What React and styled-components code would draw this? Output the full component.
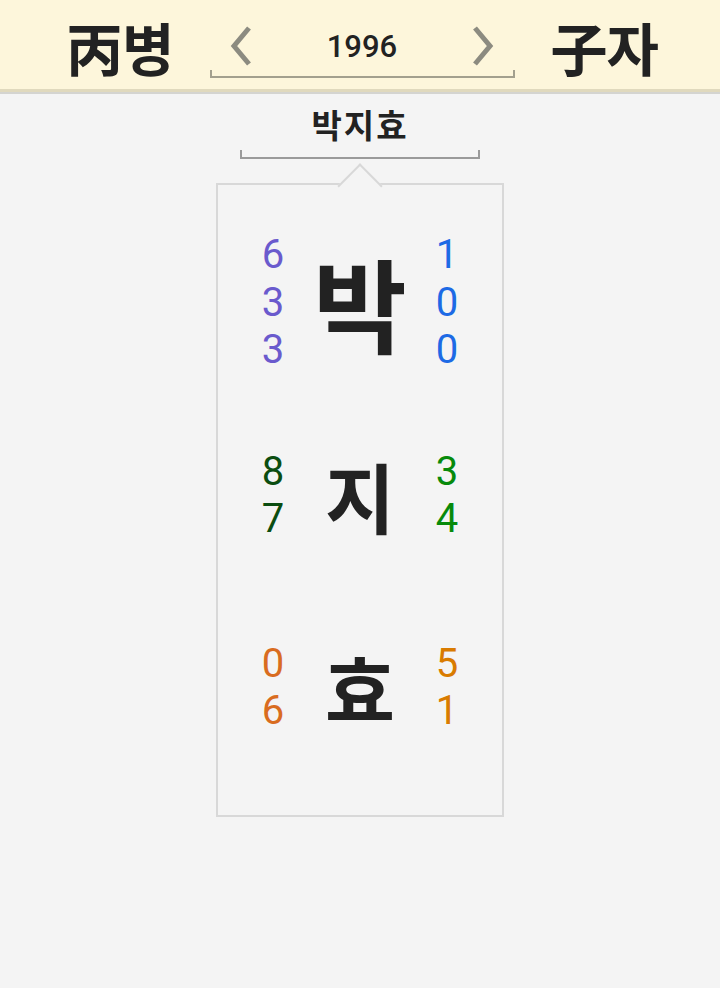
import React from 'react'
import styled, { createGlobalStyle } from 'styled-components'

const GlobalStyle = createGlobalStyle`
  html, body {
    margin: 0;
    padding: 0;
    background: #f4f4f4;
    font-family: 'Noto Sans CJK KR', 'Noto Sans', sans-serif;
    color: #222;
  }
`

const Page = styled.div`
  min-height: 988px;
  display: flex;
  flex-direction: column;
  align-items: center;
`

const Header = styled.header`
  align-self: stretch;
  height: 89px;
  background: #fdf6db;
  border-bottom: 3px solid #e0d9bd;
  box-shadow: 0 2px 0 #d4d4d0;
  display: flex;
  align-items: center;
  justify-content: center;
  gap: 36px;
  padding-left: 4px;
`

const Ganji = styled.div`
  font-size: 57px;
  font-weight: 700;
  line-height: 1;
  color: #222;
  letter-spacing: -1px;
  margin-top: 4px;
`

const YearPicker = styled.div`
  position: relative;
  width: 305px;
  height: 50px;
  display: flex;
  align-items: center;
  justify-content: space-between;
  padding: 0 18px;
  box-sizing: border-box;
  margin-top: 2px;
`

const Bracket = styled.div`
  position: absolute;
  left: 0;
  right: 0;
  bottom: ${p => p.$bottom || 0}px;
  height: ${p => p.$tick || 5}px;
  border: 2px solid ${p => p.$color || '#a09c8a'};
  border-top: none;
`

const Chevron = styled.button`
  border: none;
  background: none;
  padding: 0;
  width: 26px;
  height: 44px;
  display: flex;
  align-items: center;
  justify-content: center;
  cursor: pointer;
`

const Year = styled.div`
  font-family: Roboto, 'Noto Sans', sans-serif;
  font-size: 31px;
  font-weight: 500;
  line-height: 1;
  color: #222;
  margin-top: 2px;
`

const NameBlock = styled.div`
  position: relative;
  width: 240px;
  margin-top: 8px;
  padding-bottom: 11px;
  display: flex;
  justify-content: center;
`

const Name = styled.div`
  font-size: 33px;
  font-weight: 700;
  line-height: 48px;
  letter-spacing: 2px;
  color: #222;
`

const Card = styled.div`
  position: relative;
  width: 288px;
  height: 634px;
  margin-top: 24px;
  border: 2px solid #d8d8d8;
  box-sizing: border-box;
  background: #f4f4f4;
  display: flex;
  flex-direction: column;
  padding-top: 46px;

  &::before {
    content: '';
    position: absolute;
    top: -15px;
    left: 126px;
    width: 30px;
    height: 30px;
    background: #f4f4f4;
    border-left: 2px solid #d8d8d8;
    border-top: 2px solid #d8d8d8;
    transform: rotate(45deg);
  }
`

const Row = styled.div`
  display: grid;
  grid-template-columns: 56px 1fr 56px;
  align-items: center;
  padding: 0 27px;
  margin-top: ${p => p.$gap}px;
`

const Digits = styled.div`
  display: flex;
  flex-direction: column;
  align-items: center;
  font-size: 40px;
  line-height: 47.5px;
  font-family: Roboto, 'Noto Sans', sans-serif;
  color: ${p => p.$color};
`

const Syllable = styled.div`
  text-align: center;
  font-size: ${p => p.$size}px;
  font-weight: 700;
  line-height: 1;
  color: #222;
`

const rows = [
  { ch: '박', left: ['6', '3', '3'], right: ['1', '0', '0'], lc: '#6a5acd', rc: '#1d6ae5', size: 102, gap: 0 },
  { ch: '지', left: ['8', '7'], right: ['3', '4'], lc: '#0b4d10', rc: '#078a0b', size: 76, gap: 74 },
  { ch: '효', left: ['0', '6'], right: ['5', '1'], lc: '#d96c1f', rc: '#d97b00', size: 76, gap: 97 },
]

const ChevronIcon = ({ dir }) => (
  <svg width="24" height="42" viewBox="0 0 24 42">
    <polyline
      points={dir === 'left' ? '20,3 5,21 20,39' : '4,3 19,21 4,39'}
      fill="none"
      stroke="#8c8b80"
      strokeWidth="5"
    />
  </svg>
)

const App = () => {
  return (
    <Page>
      <GlobalStyle />
      <Header>
        <Ganji>丙병</Ganji>
        <YearPicker>
          <Chevron aria-label="previous year"><ChevronIcon dir="left" /></Chevron>
          <Year>1996</Year>
          <Chevron aria-label="next year"><ChevronIcon dir="right" /></Chevron>
          <Bracket $bottom={-7} $tick={6} $color="#a3a08e" />
        </YearPicker>
        <Ganji>子자</Ganji>
      </Header>

      <NameBlock>
        <Name>박지효</Name>
        <Bracket $bottom={0} $tick={7} $color="#9a9a9a" />
      </NameBlock>

      <Card>
        {rows.map(r => (
          <Row key={r.ch} $gap={r.gap}>
            <Digits $color={r.lc}>
              {r.left.map((d, i) => <span key={i}>{d}</span>)}
            </Digits>
            <Syllable $size={r.size}>{r.ch}</Syllable>
            <Digits $color={r.rc}>
              {r.right.map((d, i) => <span key={i}>{d}</span>)}
            </Digits>
          </Row>
        ))}
      </Card>
    </Page>
  )
}

export default App
